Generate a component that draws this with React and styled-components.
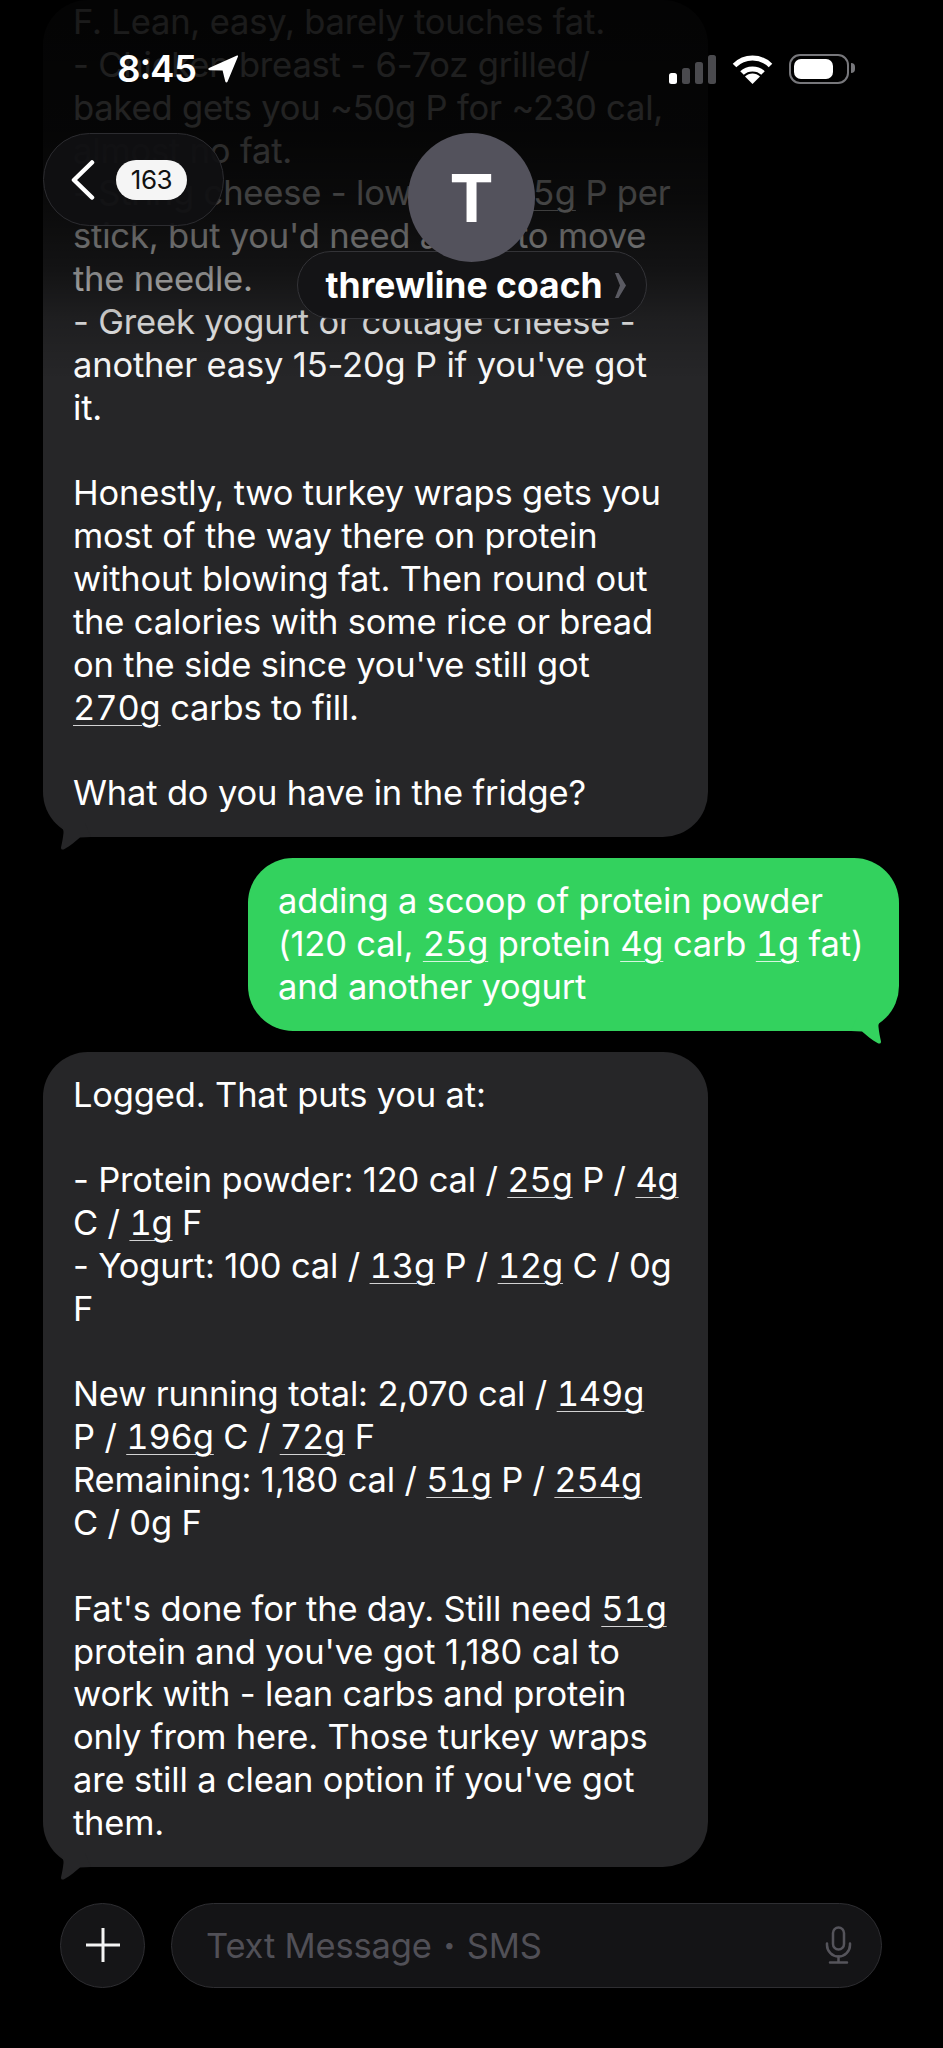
import React from "react";
import styled, { createGlobalStyle } from "styled-components";

const Global = createGlobalStyle`
  html, body { margin: 0; padding: 0; background: #000; }
  body { font-family: "Inter", "Liberation Sans", sans-serif; -webkit-font-smoothing: antialiased; }
`;

const Screen = styled.div`
  position: relative;
  width: 943px;
  height: 2048px;
  overflow: hidden;
  background: #000;
  color: #fff;
`;

const Thread = styled.main`
  display: flex;
  flex-direction: column;
  gap: 21px;
  padding: 0 44px 0 43px;
`;

const Bubble = styled.div`
  position: relative;
  box-sizing: border-box;
  align-self: ${(p) => (p.$out ? "flex-end" : "flex-start")};
  width: ${(p) => (p.$out ? "651px" : "665px")};
  padding: ${(p) => (p.$flush ? "1px 30px 22px" : "22px 30px")};
  border-radius: 45px;
  background: ${(p) => (p.$out ? "#33d25e" : "#262628")};
  font-size: 34.5px;
  line-height: 42.85px;
  letter-spacing: -0.17px;
  font-weight: 400;
`;

const Line = styled.div`
  min-height: 42.85px;
  white-space: nowrap;
`;

const Link = styled.span`
  font-variant-numeric: tabular-nums;
  text-decoration: underline;
  text-decoration-thickness: 1px;
  text-underline-offset: 5px;
  text-decoration-color: rgba(255, 255, 255, 0.8);
`;

const Tail = styled.svg`
  position: absolute;
  top: calc(100% - 16px);
  width: 40px;
  height: 30px;
  ${(p) => (p.$out ? "right: 12px; transform: scaleX(-1);" : "left: 12px;")}
  fill: ${(p) => (p.$out ? "#33d25e" : "#262628")};
`;

const Composer = styled.footer`
  display: flex;
  align-items: center;
  gap: 26px;
  margin-top: 36px;
  padding: 0 61px 0 60px;
`;

const PlusButton = styled.div`
  flex: none;
  display: flex;
  align-items: center;
  justify-content: center;
  box-sizing: border-box;
  width: 85px;
  height: 85px;
  border-radius: 50%;
  background: #151517;
  border: 1.5px solid #2e2e32;
`;

const Field = styled.div`
  flex: 1;
  display: flex;
  align-items: center;
  justify-content: space-between;
  box-sizing: border-box;
  height: 85px;
  padding: 0 29px 0 34px;
  border-radius: 43px;
  background: #141416;
  border: 1.5px solid #2e2e32;
`;

const Placeholder = styled.span`
  font-size: 34.5px;
  letter-spacing: -0.17px;
  color: #515057;
`;

const PlaceholderDot = styled.span`
  font-weight: 800;
  margin: 0 2px;
`;

const Overlay = styled.div`
  position: absolute;
  top: 0;
  left: 0;
  right: 0;
  height: 400px;
  pointer-events: none;
  background: linear-gradient(
    to bottom,
    rgba(0, 0, 0, 0.9) 0,
    rgba(0, 0, 0, 0.86) 130px,
    rgba(0, 0, 0, 0.74) 200px,
    rgba(0, 0, 0, 0.5) 270px,
    rgba(0, 0, 0, 0.2) 320px,
    rgba(0, 0, 0, 0) 380px
  );
`;

const Header = styled.header`
  position: absolute;
  top: 0;
  left: 0;
  right: 0;
`;

const StatusBar = styled.div`
  display: flex;
  align-items: center;
  justify-content: space-between;
  height: 30px;
  padding: 54px 94px 0 117px;
`;

const TimeGroup = styled.div`
  display: flex;
  align-items: center;
  gap: 10px;
`;

const Time = styled.span`
  font-size: 36.5px;
  font-weight: 600;
  line-height: 30px;
  font-variant-numeric: tabular-nums;
`;

const StatusIcons = styled.div`
  display: flex;
  align-items: center;
  gap: 16px;
`;

const Signal = styled.div`
  display: flex;
  align-items: flex-end;
  gap: 5px;
  height: 29px;
`;

const SignalBar = styled.i`
  display: block;
  width: 8px;
  height: ${(p) => p.$h}px;
  border-radius: 2.5px;
  background: ${(p) => (p.$on ? "#fff" : "#4a4a4e")};
`;

const Battery = styled.div`
  position: relative;
  box-sizing: border-box;
  width: 60px;
  height: 30px;
  padding: 3px;
  border: 2.5px solid #77777b;
  border-radius: 11px;
`;

const BatteryFill = styled.div`
  width: 39px;
  height: 100%;
  border-radius: 7px;
  background: #fff;
`;

const BatteryNub = styled.i`
  position: absolute;
  left: 60px;
  top: 7px;
  width: 4px;
  height: 10px;
  border-radius: 0 4px 4px 0;
  background: #77777b;
`;

const Nav = styled.nav`
  display: grid;
  grid-template-columns: 1fr auto 1fr;
  align-items: start;
  margin-top: 49px;
  padding: 0 43px;
`;

const BackPill = styled.div`
  justify-self: start;
  display: flex;
  align-items: center;
  gap: 21px;
  box-sizing: border-box;
  width: 181px;
  height: 93px;
  padding-left: 27px;
  border-radius: 47px;
  background: rgba(16, 16, 18, 0.94);
  border: 1.5px solid #2c2c30;
`;

const Badge = styled.span`
  display: flex;
  align-items: center;
  justify-content: center;
  width: 71px;
  height: 40px;
  border-radius: 20px;
  background: #f5f5f5;
  color: #111;
  font-size: 26px;
  letter-spacing: -0.4px;
`;

const Contact = styled.div`
  display: flex;
  flex-direction: column;
  align-items: center;
`;

const Avatar = styled.div`
  position: relative;
  z-index: 1;
  display: flex;
  align-items: center;
  justify-content: center;
  width: 127px;
  height: 129px;
  margin-bottom: -11px;
  border-radius: 50%;
  background: #53525c;
  font-size: 66px;
  font-weight: 700;
  line-height: 1;
`;

const NamePill = styled.div`
  display: flex;
  align-items: center;
  gap: 11px;
  box-sizing: border-box;
  width: 350px;
  height: 68px;
  padding-left: 28px;
  border-radius: 34px;
  background: #141416;
  border: 1.5px solid #333337;
  font-size: 35.5px;
  font-weight: 700;
`;

const Tailpath =
  "M4 2C6 6 9 8 8.5 12C8 17 7 22 6 26.5C6 29 8 29 9.5 28C15 25 21 20 25 16.5L36 16L30 2Z";

const firstBubble = [
  "F. Lean, easy, barely touches fat.",
  "- Chicken breast - 6-7oz grilled/",
  "baked gets you ~50g P for ~230 cal,",
  "almost no fat.",
  "- String cheese - low cal, _4-5g_ P per",
  "stick, but you'd need a few to move",
  "the needle.",
  "- Greek yogurt or cottage cheese -",
  "another easy 15-20g P if you've got",
  "it.",
  "",
  "Honestly, two turkey wraps gets you",
  "most of the way there on protein",
  "without blowing fat. Then round out",
  "the calories with some rice or bread",
  "on the side since you've still got",
  "_270g_ carbs to fill.",
  "",
  "What do you have in the fridge?",
];

const outBubble = [
  "adding a scoop of protein powder",
  "(120 cal, _25g_ protein _4g_ carb _1g_ fat)",
  "and another yogurt",
];

const lastBubble = [
  "Logged. That puts you at:",
  "",
  "- Protein powder: 120 cal / _25g_ P / _4g_",
  "C / _1g_ F",
  "- Yogurt: 100 cal / _13g_ P / _12g_ C / 0g",
  "F",
  "",
  "New running total: 2,070 cal / _149g_",
  "P / _196g_ C / _72g_ F",
  "Remaining: 1,180 cal / _51g_ P / _254g_",
  "C / 0g F",
  "",
  "Fat's done for the day. Still need _51g_",
  "protein and you've got 1,180 cal to",
  "work with - lean carbs and protein",
  "only from here. Those turkey wraps",
  "are still a clean option if you've got",
  "them.",
];

function Lines({ rows }) {
  return rows.map((row, i) => (
    <Line key={i}>
      {row.split("_").map((part, j) =>
        j % 2 ? <Link key={j}>{part}</Link> : part
      )}
    </Line>
  ));
}

function BubbleTail({ out }) {
  return (
    <Tail $out={out} viewBox="0 0 40 30">
      <path d={Tailpath} />
    </Tail>
  );
}

export default function App() {
  return (
    <Screen>
      <Global />
      <Thread>
        <Bubble $flush>
          <Lines rows={firstBubble} />
          <BubbleTail />
        </Bubble>
        <Bubble $out>
          <Lines rows={outBubble} />
          <BubbleTail out />
        </Bubble>
        <Bubble>
          <Lines rows={lastBubble} />
          <BubbleTail />
        </Bubble>
      </Thread>

      <Composer>
        <PlusButton>
          <svg width="34" height="34" viewBox="0 0 34 34">
            <path d="M17 0V34M0 17H34" stroke="#f4f4f4" strokeWidth="3" strokeLinecap="round" />
          </svg>
        </PlusButton>
        <Field>
          <Placeholder>Text Message <PlaceholderDot>·</PlaceholderDot> SMS</Placeholder>
          <svg width="27" height="38" viewBox="0 0 27 38" fill="none">
            <rect x="8" y="1.5" width="11" height="22" rx="5.5" stroke="#55545b" strokeWidth="2.5" />
            <path d="M2 17.5V19a11.5 11.5 0 0 0 23 0v-1.5" stroke="#55545b" strokeWidth="2.5" strokeLinecap="round" />
            <path d="M13.5 30.5V36M5 36.5H22" stroke="#55545b" strokeWidth="2.5" strokeLinecap="round" />
          </svg>
        </Field>
      </Composer>

      <Overlay />

      <Header>
        <StatusBar>
          <TimeGroup>
            <Time>8:45</Time>
            <svg width="30" height="28" viewBox="0 0 30 28">
              <path d="M29 .6C29.7.2 30.3.8 30 1.5L19.5 26.8C19 28 17.6 27.8 17.3 26.6L14.6 15.4 1.6 15.2C.2 15.1-.2 13.6 1 13Z" fill="#fff" />
            </svg>
          </TimeGroup>
          <StatusIcons>
            <Signal>
              <SignalBar $on $h={11} />
              <SignalBar $h={16} />
              <SignalBar $h={22} />
              <SignalBar $h={29} />
            </Signal>
            <svg width="41" height="30" viewBox="0 0 41 30" fill="none">
              <path d="M2.5 11.5C12.5 1.5 28.5 1.5 38.5 11.5" stroke="#fff" strokeWidth="5" />
              <path d="M10 19C15.5 13.5 25.5 13.5 31 19" stroke="#fff" strokeWidth="5" />
              <path d="M20.5 30L13 22.5C17 18.5 24 18.5 28 22.5Z" fill="#fff" />
            </svg>
            <Battery>
              <BatteryFill />
              <BatteryNub />
            </Battery>
          </StatusIcons>
        </StatusBar>
        <Nav>
          <BackPill>
            <svg width="24" height="40" viewBox="0 0 24 40" fill="none">
              <path d="M21 2.5L3 20L21 37.5" stroke="#fff" strokeWidth="4.5" strokeLinecap="round" strokeLinejoin="round" />
            </svg>
            <Badge>163</Badge>
          </BackPill>
          <Contact>
            <Avatar>T</Avatar>
            <NamePill>
              threwline coach
              <svg width="12" height="25" viewBox="0 0 12 25">
                <path d="M1 0H4.5L12 12.5L4.5 25H1L6 12.5Z" fill="#5a5a62" />
              </svg>
            </NamePill>
          </Contact>
        </Nav>
      </Header>
    </Screen>
  );
}
